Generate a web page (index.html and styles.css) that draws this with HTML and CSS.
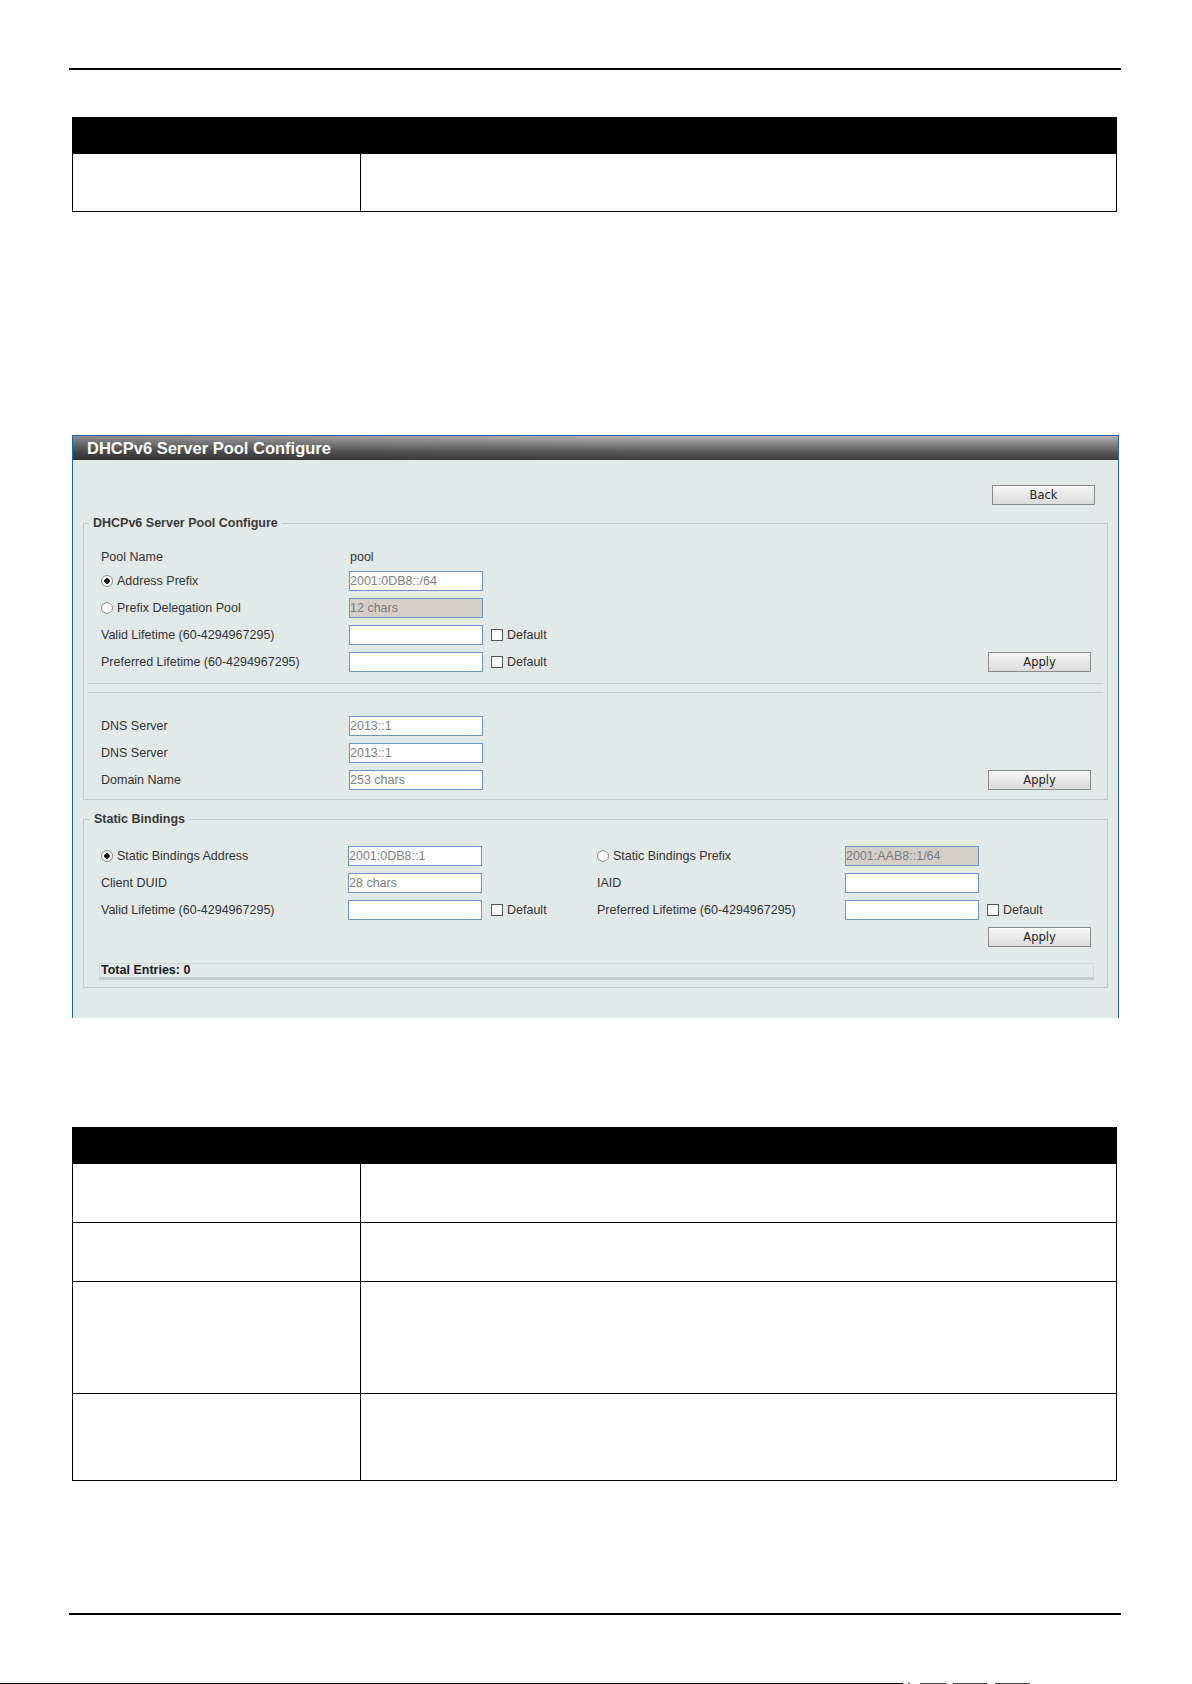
FILE: index.html
```html
<!DOCTYPE html>
<html lang="en">
<head>
    <meta charset="UTF-8">
    <title>DHCPv6 Server Pool Configure</title>
    <link rel="stylesheet" href="styles.css">
</head>
<body>
    <div class="page">
        <div class="rule"></div>

        <div class="doc-table t-short">
            <div class="doc-head"></div>
            <div class="doc-row r58"><div class="cell"></div><div class="cell"></div></div>
        </div>

        <div class="panel">
            <div class="panel-title">DHCPv6 Server Pool Configure</div>
            <div class="panel-body">
                <div class="top-actions"><button class="btn">Back</button></div>

                <fieldset class="group pool-group">
                    <legend>DHCPv6 Server Pool Configure</legend>
                    <div class="row text-row">
                        <span class="lbl">Pool Name</span>
                        <span class="val">pool</span>
                    </div>
                    <div class="row">
                        <label class="lbl"><input type="radio" name="ptype" class="radio" checked>Address Prefix</label>
                        <input type="text" class="field" placeholder="2001:0DB8::/64">
                    </div>
                    <div class="row">
                        <label class="lbl"><input type="radio" name="ptype" class="radio">Prefix Delegation Pool</label>
                        <input type="text" class="field" value="12 chars" disabled>
                    </div>
                    <div class="row">
                        <span class="lbl">Valid Lifetime (60-4294967295)</span>
                        <input type="text" class="field">
                        <label class="chk"><input type="checkbox" class="check">Default</label>
                    </div>
                    <div class="row">
                        <span class="lbl">Preferred Lifetime (60-4294967295)</span>
                        <input type="text" class="field">
                        <label class="chk"><input type="checkbox" class="check">Default</label>
                        <button class="btn push">Apply</button>
                    </div>

                    <div class="split"></div>
                    <div class="split second"></div>

                    <div class="dns">
                        <div class="row">
                            <span class="lbl">DNS Server</span>
                            <input type="text" class="field" placeholder="2013::1">
                        </div>
                        <div class="row">
                            <span class="lbl">DNS Server</span>
                            <input type="text" class="field" placeholder="2013::1">
                        </div>
                        <div class="row">
                            <span class="lbl">Domain Name</span>
                            <input type="text" class="field" placeholder="253 chars">
                            <button class="btn push">Apply</button>
                        </div>
                    </div>
                </fieldset>

                <fieldset class="group bind-group">
                    <legend>Static Bindings</legend>
                    <div class="row">
                        <label class="lbl"><input type="radio" name="btype" class="radio" checked>Static Bindings Address</label>
                        <span class="col2"><input type="text" class="field" placeholder="2001:0DB8::1"></span>
                        <label class="lbl col3"><input type="radio" name="btype" class="radio">Static Bindings Prefix</label>
                        <input type="text" class="field" value="2001:AAB8::1/64" disabled>
                    </div>
                    <div class="row">
                        <span class="lbl">Client DUID</span>
                        <span class="col2"><input type="text" class="field" placeholder="28 chars"></span>
                        <span class="lbl col3">IAID</span>
                        <input type="text" class="field">
                    </div>
                    <div class="row">
                        <span class="lbl">Valid Lifetime (60-4294967295)</span>
                        <span class="col2">
                            <input type="text" class="field">
                            <label class="chk"><input type="checkbox" class="check">Default</label>
                        </span>
                        <span class="lbl col3">Preferred Lifetime (60-4294967295)</span>
                        <input type="text" class="field">
                        <label class="chk"><input type="checkbox" class="check">Default</label>
                    </div>
                    <div class="row">
                        <button class="btn push">Apply</button>
                    </div>
                    <div class="total">Total Entries: 0</div>
                </fieldset>
            </div>
        </div>

        <div class="doc-table t-long">
            <div class="doc-head"></div>
            <div class="doc-row r59"><div class="cell"></div><div class="cell"></div></div>
            <div class="doc-row r59"><div class="cell"></div><div class="cell"></div></div>
            <div class="doc-row r112"><div class="cell"></div><div class="cell"></div></div>
            <div class="doc-row r87"><div class="cell"></div><div class="cell"></div></div>
        </div>

        <div class="rule bottom"></div>
    </div>

    <div class="page-foot">
        <span class="seg s-line"></span>
        <span class="seg s1"></span>
        <span class="seg s2"></span>
        <span class="seg s3"></span>
        <span class="seg s4"></span>
    </div>
</body>
</html>
```

FILE: styles.css
```css
* {
    box-sizing: border-box;
}
html, body {
    margin: 0;
    padding: 0;
    background: #fff;
    overflow: hidden;
}
body {
    height: 1684px;
    font-family: "Liberation Sans", Arial, sans-serif;
    font-size: 12.5px;
    color: #333;
}
.page {
    width: 1052px;
    margin-left: 69px;
    padding-top: 68px;
}
.rule {
    height: 2px;
    background: #000;
}
.rule.bottom {
    margin-top: 132px;
}

/* document tables */
.doc-table {
    margin: 0 4px 0 3px;
    border: 1px solid #000;
    border-top: 0;
}
.t-short {
    margin-top: 47px;
}
.t-long {
    margin-top: 109px;
}
.t-short .doc-head {
    height: 37px;
}
.doc-head {
    height: 36px;
    background: #000;
}
.doc-row {
    display: grid;
    grid-template-columns: 287px 1fr;
    border-top: 1px solid #000;
}
.doc-row .cell + .cell {
    border-left: 1px solid #000;
}
.t-short .doc-row {
    border-top: 0;
}
.r58 { height: 57px; }
.r59 { height: 59px; }
.r112 { height: 112px; }
.r87 { height: 87px; }

/* config panel */
.panel {
    margin: 223px 0 0 3px;
    width: 1047px;
    height: 583px;
    border: 1px solid #23659f;
    border-bottom: 0;
    background: #e2eae9;
    overflow: hidden;
}
.panel-title {
    height: 24px;
    line-height: 24px;
    padding-left: 14px;
    color: #fff;
    font-size: 16.5px;
    font-weight: bold;
    background:
        linear-gradient(90deg, rgba(0, 0, 0, 0.22), rgba(0, 0, 0, 0) 55%),
        linear-gradient(180deg, #b4b4b4 0%, #8a8a8a 30%, #555 70%, #3e3e3e 100%);
}
.panel-body {
    padding: 25px 10px 0 10px;
}
.top-actions {
    display: flex;
    justify-content: flex-end;
    padding-right: 13px;
}

.btn {
    width: 103px;
    height: 20px;
    padding: 0;
    border: 1px solid #8a8a8a;
    background: linear-gradient(180deg, #f6f6f6, #dcdcdc);
    box-shadow: inset 0 1px 0 #fff;
    font-family: "DejaVu Sans", Tahoma, sans-serif;
    font-size: 11.5px;
    color: #222;
}
.push {
    margin-left: auto;
}

.group {
    margin: 11px 0 0;
    padding: 16px 16px 6px 0;
    min-width: 0;
    border: 1px solid #bfcaca;
}
.group legend {
    margin-left: 5px;
    padding: 0 4px;
    line-height: 15px;
    font-weight: bold;
    color: #3a3a3a;
}
.bind-group {
    margin-top: 12px;
    padding-top: 15px;
    padding-bottom: 7px;
}
.bind-group legend {
    margin-left: 6px;
}

.row {
    display: flex;
    align-items: center;
    height: 27px;
    padding-left: 17px;
}
.text-row {
    height: 20px;
}
.lbl {
    display: flex;
    align-items: center;
    width: 248px;
    flex: none;
}
.bind-group .lbl {
    width: 247px;
}
.bind-group .col3 {
    width: 248px;
}
.col2 {
    display: flex;
    align-items: center;
    width: 249px;
    flex: none;
}
.val {
    padding-left: 1px;
}

.field {
    width: 134px;
    height: 20px;
    padding: 0;
    border: 1px solid #6d96c8;
    background: #fff;
    font-family: "Liberation Sans", Arial, sans-serif;
    font-size: 12.5px;
    color: #808080;
    outline: none;
}
.field::placeholder {
    color: #808080;
}
.field:disabled {
    background: #d4d0c8;
    color: #7a7a7a;
}

.radio {
    appearance: none;
    width: 12px;
    height: 12px;
    margin: 1px 4px 0 0;
    border: 1px solid #8c8c8c;
    border-radius: 50%;
    background: #fff;
}
.radio:checked {
    background: radial-gradient(circle, #111 0, #111 2.5px, #fff 3px);
}
.chk {
    display: flex;
    align-items: center;
    margin-left: 9px;
}
.row > .chk {
    margin-left: 8px;
}
.check {
    appearance: none;
    width: 12px;
    height: 12px;
    margin: 1px 4px 0 0;
    border: 1px solid #555;
    background: #fff;
}

/* double rule between the pool and DNS blocks */
.split {
    margin: 8px -12px 0 4px;
    height: 1px;
    background: #c5cece;
}
.dns {
    margin-top: 19px;
}

.total {
    margin: 13px -3px 0 15px;
    height: 17px;
    line-height: 13px;
    padding-left: 1px;
    border: 1px solid #d0d8d8;
    border-bottom: 3px solid #c6caca;
    font-weight: bold;
    color: #1a1a1a;
}

/* clipped footer line at the very bottom */
.page-foot {
    display: flex;
    margin-top: 68px;
    height: 1px;
}
.seg {
    display: block;
    height: 1px;
    background: #444;
}
.s-line { width: 903px; background: #000; }
.s1 { width: 2px; margin-left: 5px; }
.s2 { width: 26px; margin-left: 10px; }
.s3 { width: 34px; margin-left: 7px; }
.s4 { width: 35px; margin-left: 8px; }
```
